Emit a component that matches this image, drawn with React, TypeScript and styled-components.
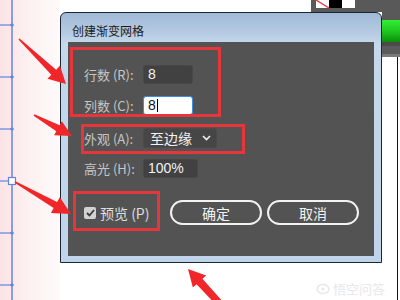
import styled, { createGlobalStyle } from 'styled-components';

const GlobalStyle = createGlobalStyle`
  html, body {
    margin: 0;
    padding: 0;
  }
  body {
    width: 400px;
    height: 300px;
    overflow: hidden;
    background: #fff;
    font-family: "Noto Sans CJK SC", "Noto Sans", sans-serif;
  }
`;

const Page = styled.div`
  position: relative;
  width: 400px;
  height: 300px;
  display: flex;
  overflow: hidden;
  background: #fff;
`;

const LeftStrip = styled.div`
  width: 60px;
  flex: none;
  background: linear-gradient(to right, #fbe3e5 0%, #fdf0f0 45%, #fffafa 100%);
  svg { display: block; }
`;

const Center = styled.div`
  width: 322px;
  flex: none;
  display: flex;
  flex-direction: column;
`;

const TopBar = styled.div`
  height: 12px;
  display: flex;
`;

const TopWhite = styled.div`
  flex: 1;
  background: #fff;
`;

const TopGray = styled.div`
  width: 66px;
  background: #595959;
  display: flex;
  align-items: flex-start;
  padding-left: 5px;
`;

const Swatch = styled.div<{ $kind: 'none' | 'black' | 'white' }>`
  width: 13px;
  height: 8px;
  background: ${(p) =>
    p.$kind === 'black'
      ? '#000'
      : p.$kind === 'white'
      ? '#fff'
      : 'linear-gradient(to top right, #fff calc(50% - 1.2px), #e0262b 50%, #fff calc(50% + 1.2px))'};
`;

const Dialog = styled.div`
  height: 251px;
  box-sizing: border-box;
  border: 1px solid #1c2630;
  border-radius: 6px 6px 0 0;
  background: linear-gradient(to bottom, #9fb9d6 0px, #b3c9e1 18px, #c4d7eb 30px, #bfd4ea 100%);
  display: flex;
  flex-direction: column;
  padding: 0 7px 6px;
`;

const TitleBar = styled.div`
  height: 29px;
  box-sizing: border-box;
  padding: 5px 0 0 4px;
  display: flex;
  align-items: center;
  font-size: 12px;
  color: #1b1b1b;
`;

const Body = styled.div`
  flex: 1;
  background: #535353;
  display: flex;
  flex-direction: column;
  padding: 22px 0 0 16px;
  color: #c8c8c8;
`;

const Row = styled.div<{ $gap: number }>`
  height: 20px;
  margin-top: ${(p) => p.$gap}px;
  display: flex;
  align-items: center;
`;

const Label = styled.div`
  width: 59px;
  font-size: 13px;
  color: #c6c6c6;
  white-space: nowrap;
`;

const Field = styled.div<{ $w: number; $focus?: boolean }>`
  width: ${(p) => p.$w}px;
  height: 19px;
  box-sizing: border-box;
  border-radius: 3px;
  padding-left: 4px;
  display: flex;
  align-items: center;
  font-size: 14px;
  font-family: "Liberation Sans", "Noto Sans", sans-serif;
  background: ${(p) => (p.$focus ? '#fff' : '#414141')};
  border: 1px solid ${(p) => (p.$focus ? '#3b8ee0' : '#474747')};
  color: ${(p) => (p.$focus ? '#111' : '#f2f2f2')};
`;

const Caret = styled.span`
  width: 1px;
  height: 13px;
  background: #000;
  margin-left: 1px;
`;

const Select = styled.div`
  width: 74px;
  height: 20px;
  box-sizing: border-box;
  border-radius: 3px;
  background: #464646;
  border: 1px solid #4a4a4a;
  display: flex;
  align-items: center;
  justify-content: space-between;
  padding: 0 5px 0 6px;
  font-size: 14px;
  color: #f4f4f4;
`;

const Bottom = styled.div`
  margin-top: 22px;
  height: 25px;
  display: flex;
  align-items: center;
`;

const Preview = styled.div`
  width: 86px;
  display: flex;
  align-items: center;
  gap: 4px;
  font-size: 14px;
  color: #dedede;
`;

const Check = styled.div`
  width: 12px;
  height: 12px;
  border-radius: 2px;
  background: #d2d2d2;
  display: flex;
  align-items: center;
  justify-content: center;
`;

const Buttons = styled.div`
  display: flex;
  gap: 5px;
`;

const Button = styled.div`
  width: 92px;
  height: 25px;
  box-sizing: border-box;
  border: 2px solid #f2f2f2;
  border-radius: 13px;
  display: flex;
  align-items: center;
  justify-content: center;
  font-size: 14px;
  color: #f2f2f2;
`;

const Footer = styled.div`
  flex: 1;
  background: #fff;
`;

const RightStrip = styled.div`
  flex: 1;
  display: flex;
  flex-direction: column;
  background: #fff;
`;

const GrayBlock = styled.div<{ $h: number }>`
  height: ${(p) => p.$h}px;
  background: #595959;
`;

const GreenBar = styled.div`
  height: 22px;
  background: linear-gradient(to bottom, #33ee33 0%, #22cc22 45%, #0a8f0a 100%);
`;

const Divider = styled.div`
  height: 15px;
  background: #5b5b5b;
  border-top: 4px solid #4a4a4a;
  box-sizing: border-box;
  box-shadow: inset 0 -8px 0 -5px #7a7a7a;
`;

const WhitePanel = styled.div`
  flex: 1;
  width: 15px;
  background: #fff;
  border-right: 1px solid #111;
`;

const Mark = styled.div<{ $x: number; $y: number; $w: number; $h: number }>`
  position: absolute;
  left: ${(p) => p.$x}px;
  top: ${(p) => p.$y}px;
  width: ${(p) => p.$w}px;
  height: ${(p) => p.$h}px;
  box-sizing: border-box;
  border: 3px solid #e6363b;
  pointer-events: none;
`;

const Overlay = styled.svg`
  position: absolute;
  left: 0;
  top: 0;
  pointer-events: none;
`;

const Watermark = styled.div`
  position: absolute;
  left: 316px;
  top: 279px;
  display: flex;
  align-items: center;
  gap: 3px;
  font-size: 13px;
  color: #e8e8e8;
`;

function arrowPoints(sx: number, sy: number, tx: number, ty: number, head: number, hw: number, t0: number, t1: number) {
  const len = Math.hypot(tx - sx, ty - sy);
  const dx = (tx - sx) / len;
  const dy = (ty - sy) / len;
  const nx = -dy;
  const ny = dx;
  const bx = tx - dx * head;
  const by = ty - dy * head;
  const pts = [
    [sx + nx * t0, sy + ny * t0],
    [bx + nx * t1, by + ny * t1],
    [bx + nx * hw, by + ny * hw],
    [tx, ty],
    [bx - nx * hw, by - ny * hw],
    [bx - nx * t1, by - ny * t1],
    [sx - nx * t0, sy - ny * t0],
  ];
  return pts.map((p) => p.join(',')).join(' ');
}

const arrows = [
  arrowPoints(19, 39, 66, 84, 17, 9, 0.8, 3.5),
  arrowPoints(34, 115, 72, 136, 16, 8, 0.8, 3.5),
  arrowPoints(15, 182, 71, 214, 18, 9, 0.8, 3.5),
  arrowPoints(222, 306, 188, 269, 17, 9, 3.5, 4),
];

const ticks = [25, 77, 129, 233, 285];

export default function App() {
  return (
    <>
      <GlobalStyle />
      <Page>
        <LeftStrip>
          <svg width="60" height="300">
            <line x1="12" y1="0" x2="12" y2="300" stroke="#6384e2" strokeWidth="1.5" />
            {ticks.map((y) => (
              <g key={y}>
                <line x1="0" y1={y} x2="12" y2={y} stroke="#6384e2" strokeWidth="1.2" />
                <rect x="10.5" y={y - 1.5} width="3" height="3" fill="#6384e2" transform={`rotate(45 12 ${y})`} />
              </g>
            ))}
            <line x1="0" y1="181" x2="9" y2="181" stroke="#6384e2" strokeWidth="1.2" />
            <rect x="8.5" y="177.5" width="7" height="7" fill="#fff" stroke="#6384e2" strokeWidth="1.2" />
          </svg>
        </LeftStrip>

        <Center>
          <TopBar>
            <TopWhite />
            <TopGray>
              <Swatch $kind="none" />
              <Swatch $kind="black" />
              <Swatch $kind="white" />
            </TopGray>
          </TopBar>

          <Dialog>
            <TitleBar>创建渐变网格</TitleBar>
            <Body>
              <Row $gap={0}>
                <Label>行数 (R):</Label>
                <Field $w={50}>8</Field>
              </Row>
              <Row $gap={11}>
                <Label>列数 (C):</Label>
                <Field $w={50} $focus>
                  8<Caret />
                </Field>
              </Row>
              <Row $gap={13}>
                <Label>外观 (A):</Label>
                <Select>
                  至边缘
                  <svg width="9" height="6" viewBox="0 0 9 6">
                    <polyline points="1,1 4.5,4.5 8,1" fill="none" stroke="#f0f0f0" strokeWidth="1.6" />
                  </svg>
                </Select>
              </Row>
              <Row $gap={10}>
                <Label>高光 (H):</Label>
                <Field $w={55}>100%</Field>
              </Row>
              <Bottom>
                <Preview>
                  <Check>
                    <svg width="9" height="8" viewBox="0 0 9 8">
                      <polyline points="1,4 3.5,6.5 8,1" fill="none" stroke="#3a3a3a" strokeWidth="1.8" />
                    </svg>
                  </Check>
                  预览 (P)
                </Preview>
                <Buttons>
                  <Button>确定</Button>
                  <Button>取消</Button>
                </Buttons>
              </Bottom>
            </Body>
          </Dialog>

          <Footer />
        </Center>

        <RightStrip>
          <GrayBlock $h={20} />
          <GreenBar />
          <Divider />
          <WhitePanel />
        </RightStrip>

        <Mark $x={70} $y={47} $w={151} $h={70} />
        <Mark $x={81} $y={124} $w={164} $h={30} />
        <Mark $x={73} $y={191} $w={87} $h={40} />

        <Overlay width="400" height="300">
          {arrows.map((p, i) => (
            <polygon key={i} points={p} fill="#f0262b" />
          ))}
        </Overlay>

        <Watermark>
          <svg width="14" height="12" viewBox="0 0 14 12">
            <ellipse cx="7" cy="6" rx="6" ry="4.5" fill="none" stroke="#e8e8e8" strokeWidth="1.5" />
            <circle cx="7" cy="6" r="1.6" fill="#e8e8e8" />
          </svg>
          悟空问答
        </Watermark>
      </Page>
    </>
  );
}
